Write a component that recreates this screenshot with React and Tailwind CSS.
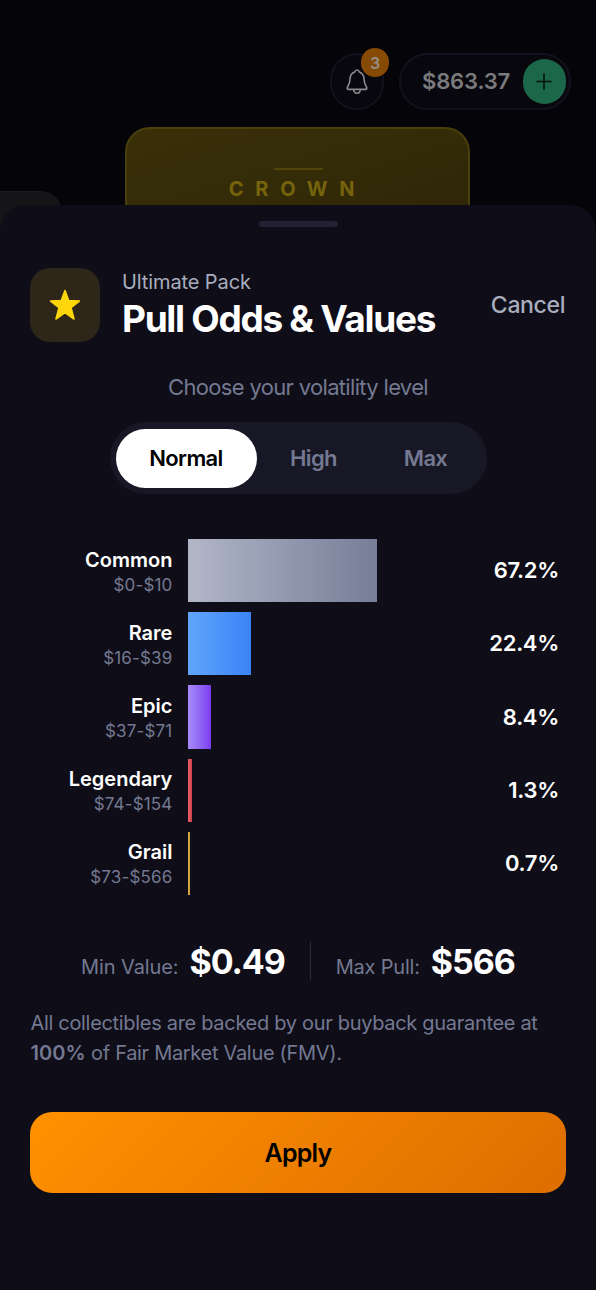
import { useState } from 'react'
import clsx from 'clsx'

const LEVELS = [
  { id: 'normal', label: 'Normal', size: 'w-[141px]' },
  { id: 'high',   label: 'High',   size: 'w-[114px]' },
  { id: 'max',    label: 'Max',    size: 'w-[110px]' },
]

const TIERS = [
  { name: 'Common',    range: '$0-$10',   odds: 67.2, bar: 'from-[#b2b7c8] to-[#767e98]' },
  { name: 'Rare',      range: '$16-$39',  odds: 22.4, bar: 'from-[#60a5fa] to-[#3b82f6]' },
  { name: 'Epic',      range: '$37-$71',  odds: 8.4,  bar: 'from-[#a78bfa] to-[#7c3aed]' },
  { name: 'Legendary', range: '$74-$154', odds: 1.3,  bar: 'from-[#ef5f68] to-[#c9414b]' },
  { name: 'Grail',     range: '$73-$566', odds: 0.7,  bar: 'from-[#d9b044] to-[#c99a35]' },
]

function BellIcon() {
  return (
    <svg width="22" height="26" viewBox="0 0 22 26" fill="none" stroke="#8b8b8f" strokeWidth="1.6" strokeLinejoin="round" strokeLinecap="round">
      <path d="M8.600 3C9 1.700 9.800 1 11 1s2 .7 2.400 2c2.600 1 4.300 3.200 4.500 6.300.2 3.600.7 6.200 2.500 8.700.9 1.300.4 2.400-1 2.400H2.600c-1.400 0-1.900-1.100-1-2.400 1.800-2.500 2.300-5.100 2.500-8.700C4.300 6.200 6 4 8.600 3Z" />
      <path d="M7.700 20.800c.2 2.200 1.400 3.500 3.300 3.500s3.100-1.300 3.300-3.500" />
    </svg>
  )
}

function StarIcon() {
  return (
    <svg width="32" height="32" viewBox="0 0 32 32" fill="#ffd60a" stroke="#ffd60a" strokeWidth="1.6" strokeLinejoin="round">
      <path d="M16 1.500 19.700 11.500 30.400 12 22 18.700 25 30 16 23.700 7 30 10 18.700 1.600 12 12.300 11.500Z" />
    </svg>
  )
}

function Backdrop() {
  return (
    <div className="h-[235px] overflow-hidden">
      {/* ── Top bar ── */}
      <div className="flex justify-end gap-[15px] h-[127px] pt-[53px] pr-[25px]">
        <div className="relative flex items-center justify-center w-[54px] h-[57px] rounded-full border-2 border-[#13121c] bg-[#08070d]">
          <BellIcon />
          <span className="absolute -top-[7px] left-[29px] flex items-center justify-center w-[28px] h-[29px] rounded-full bg-[#874a05] text-[16px] font-semibold text-[#95908b]">
            3
          </span>
        </div>
        <div className="flex items-center justify-between w-[172px] h-[57px] rounded-full border-2 border-[#13121c] bg-[#08070d] pl-[21px] pr-[3.5px]">
          <span className="text-[22px] font-semibold text-[#7b7b7e] tracking-[-0.15px]">$863.37</span>
          <span className="flex items-center justify-center w-[43px] h-[45px] rounded-full bg-[#1c6649]">
            <svg width="16" height="17" viewBox="0 0 16 17" stroke="#07120d" strokeWidth="1.6" strokeLinecap="round">
              <path d="M8 1v15M1 8.500h14" />
            </svg>
          </span>
        </div>
      </div>

      {/* ── Packs carousel ── */}
      <div className="flex items-start">
        <div className="w-[62px] h-[60px] mt-[64px] mr-[63px] rounded-tr-[22px] border-t border-r border-[#1b1b1e] bg-[#151518]" />
        <div className="flex flex-col items-center w-[345px] h-[110px] pt-[39px] rounded-t-[25px] border-2 border-[#4a3f0b] bg-linear-to-br from-[#393009] to-[#2e2507]">
          <div className="w-[49px] h-[2px] ml-px bg-[#51450a]" />
          <span className="mt-[5px] text-[20px] leading-[28px] font-bold tracking-[11.7px] text-[#75640c]">CROWN</span>
        </div>
      </div>
    </div>
  )
}

function OddsRow({ tier }) {
  return (
    <div className="flex items-center h-[63.3px]">
      <div className="w-[142px] pt-[3px] text-right">
        <div className="text-[20px] leading-[25px] font-semibold text-white">{tier.name}</div>
        <div className="text-[17px] leading-[24px] tracking-[0.15px] text-[#747991]">{tier.range}</div>
      </div>
      <div className="w-[281px] h-full ml-[15.5px]">
        <div className={clsx('h-full bg-linear-to-r', tier.bar)} style={{ width: `${tier.odds}%` }} />
      </div>
      <div className="flex-1 text-right text-[22px] font-semibold tracking-[-0.3px] text-white">{tier.odds}%</div>
    </div>
  )
}

export default function App() {
  const [level, setLevel] = useState('normal')

  return (
    <div className="w-[596px] h-[1290px] overflow-hidden bg-[#050409] font-['Inter',sans-serif]">
      <Backdrop />

      <div className="relative -mt-[30px] h-[1085px] rounded-t-[26px] bg-[#0e0d18] px-[30.4px] pt-[16px]">
        <div className="w-[79px] h-[6px] mx-auto rounded-full bg-[#242136]" />

        {/* ── Header ── */}
        <div className="flex items-center h-[74px] mt-[41px]">
          <div className="flex items-center justify-center w-[70px] h-[74px] rounded-[20px] bg-[#2d2619]">
            <StarIcon />
          </div>
          <div className="ml-[21.6px]">
            <div className="text-[20px] leading-[26px] tracking-[-0.1px] text-[#a9adbd]">Ultimate Pack</div>
            <h1 className="text-[37px] leading-[47px] font-bold tracking-[-1.32px] text-white whitespace-nowrap">Pull Odds & Values</h1>
          </div>
          <button type="button" className="ml-auto mr-[0.5px] text-[23px] font-medium tracking-[-0.35px] text-[#a9adbd]">Cancel</button>
        </div>

        {/* ── Volatility ── */}
        <p className="mt-[30px] text-center text-[22px] leading-[30px] tracking-[-0.67px] text-[#747991]">Choose your volatility level</p>
        <div className="flex items-center w-[377px] h-[72px] mx-auto mt-[20px] pl-[6px] rounded-full bg-[#181725]">
          {LEVELS.map(l => (
            <button
              key={l.id}
              type="button"
              onClick={() => setLevel(l.id)}
              className={clsx(
                'h-[59px] rounded-full text-[22px] font-semibold tracking-[-0.65px]',
                l.size,
                level === l.id ? 'bg-white text-black' : 'text-[#747991]'
              )}
            >
              {l.label}
            </button>
          ))}
        </div>

        {/* ── Odds ── */}
        <div className="flex flex-col gap-[9.9px] mt-[45px] pr-[6.6px]">
          {TIERS.map(t => <OddsRow key={t.name} tier={t} />)}
        </div>

        {/* ── Value range ── */}
        <div className="flex items-center justify-center h-[39px] mt-[46px] whitespace-nowrap">
          <div className="flex items-baseline gap-[11px] pt-[2px]">
            <span className="text-[20px] tracking-[-0.1px] text-[#747991]">Min Value:</span>
            <span className="text-[34px] leading-[39px] font-bold tracking-[-1.1px] text-white">$0.49</span>
          </div>
          <div className="w-px h-[39px] mx-[25px] bg-[#2b2a3d]" />
          <div className="flex items-baseline gap-[11px] pt-[2px]">
            <span className="text-[20px] tracking-[-0.2px] text-[#747991]">Max Pull:</span>
            <span className="text-[34px] leading-[39px] font-bold tracking-[-1px] text-white">$566</span>
          </div>
        </div>

        <p className="mt-[28px] text-[20px] leading-[30px] tracking-[-0.31px] text-[#747991] whitespace-nowrap">
          All collectibles are backed by our buyback guarantee at<br />
          <strong className="font-semibold tracking-[0.1px]">100%</strong> of Fair Market Value (FMV).
        </p>

        <button
          type="button"
          className="block w-full h-[81px] mt-[44px] pt-[3px] rounded-[22px] bg-linear-135 from-[#ff9100] to-[#dd6e00] text-[25px] font-semibold tracking-[-0.8px] text-black"
        >
          Apply
        </button>
      </div>
    </div>
  )
}
